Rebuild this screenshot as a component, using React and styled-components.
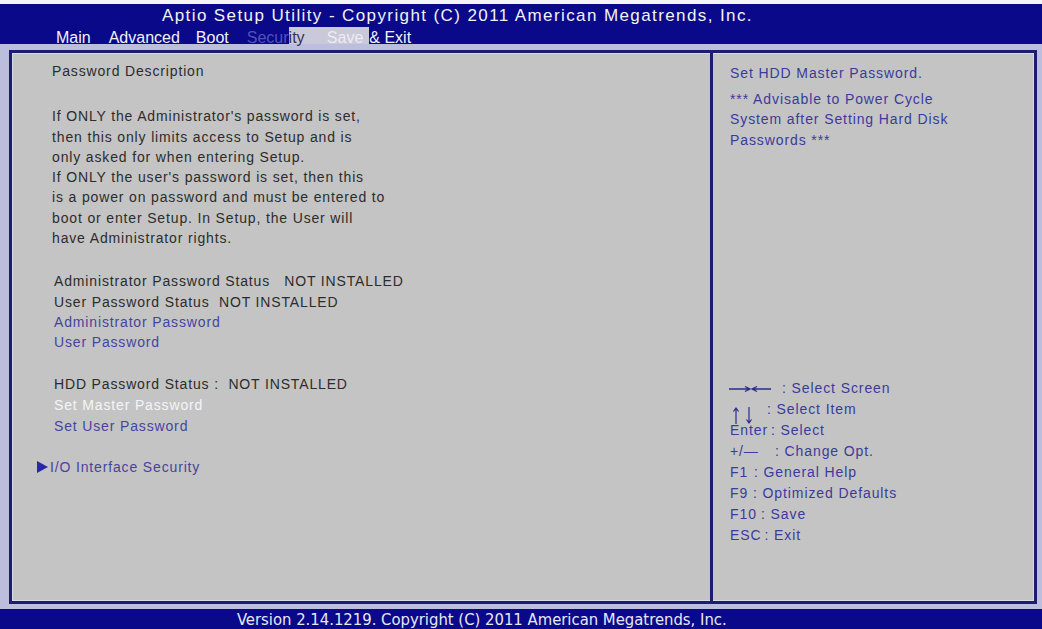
import React from 'react';
import styled, { createGlobalStyle } from 'styled-components';

const GlobalStyle = createGlobalStyle`
  html, body {
    margin: 0;
    padding: 0;
    background: #bdbddd;
  }
  body {
    font-family: "Liberation Sans", Arial, sans-serif;
  }
`;

const colors = {
  blue: '#09098a',
  navy: '#1c1c72',
  panel: '#c4c4c4',
  text: '#2c2c2c',
  link: '#44449f',
  help: '#3b3b9b',
  white: '#f2f2f6',
};

const Screen = styled.div`
  width: 1042px;
  height: 629px;
  box-sizing: border-box;
  border-top: 4px solid #f4f4fa;
  background: #bdbddd;
  display: flex;
  flex-direction: column;
  overflow: hidden;
`;

const TitleBar = styled.header`
  height: 40px;
  flex: none;
  background: ${colors.blue};
  color: ${colors.white};
  display: flex;
  flex-direction: column;
`;

const Title = styled.div`
  padding: 2px 0 0 162px;
  font-size: 17px;
  letter-spacing: 1.4px;
  line-height: 19px;
  white-space: pre;
`;

const MenuBar = styled.nav`
  margin-top: auto;
  height: 17px;
  padding-left: 56px;
  display: flex;
  align-items: stretch;
  font-size: 16px;
`;

const Tab = styled.span`
  line-height: 17px;
  padding-top: 2px;
  margin-right: ${p => p.$gap ?? 17}px;
  color: ${p => p.$faded ? '#5252b6' : colors.white};
  white-space: pre;
`;

const Highlight = styled.span`
  display: flex;
  background: #c9c9d9;
  padding-right: 6px;
  white-space: pre;
`;

const HiText = styled.span`
  line-height: 17px;
  padding-top: 2px;
  color: ${p => p.$light ? '#ececf2' : '#34345c'};
`;

const Body = styled.main`
  flex: 1;
  display: flex;
  padding: 6px 5px 5px 9px;
  min-height: 0;
`;

const Frame = styled.div`
  flex: 1;
  display: flex;
  border: 3px solid ${colors.navy};
  background: ${colors.panel};
  box-shadow: inset 0 0 0 1px #dadae6;
`;

const LeftPane = styled.section`
  flex: 1;
  border-right: 3px solid ${colors.navy};
  padding: 8px 0 0 40px;
  font-size: 14px;
  letter-spacing: 0.85px;
`;

const RightPane = styled.aside`
  width: 321px;
  flex: none;
  padding: 10px 0 0 17px;
  box-sizing: border-box;
  display: flex;
  flex-direction: column;
  font-size: 14px;
  letter-spacing: 0.9px;
  color: ${colors.help};
`;

const Block = styled.div`
  margin-top: ${p => p.$gap || 0}px;
  padding-left: ${p => p.$indent || 0}px;
`;

const tones = {
  text: colors.text,
  link: colors.link,
  active: '#f4f4f8',
};

const Line = styled.div`
  height: ${p => p.$h || 20.3}px;
  line-height: ${p => p.$h || 20.3}px;
  white-space: pre;
  color: ${p => tones[p.$tone || 'text']};
  display: flex;
  align-items: center;
`;

const Pointer = styled.span`
  width: 0;
  height: 0;
  border-top: 6px solid transparent;
  border-bottom: 6px solid transparent;
  border-left: 11px solid #2828a4;
  margin: 0 2px 0 -15px;
`;

const HelpText = styled.div`
  line-height: 20.5px;
  height: 20.5px;
  margin-bottom: ${p => p.$after || 0}px;
  white-space: pre;
`;

const HelpList = styled.div`
  margin-top: 227px;
`;

const HelpRow = styled.div`
  height: 21px;
  display: flex;
  align-items: center;
  white-space: pre;
`;

const Key = styled.span`
  min-width: ${p => p.$w}px;
  height: 21px;
  margin-right: 3px;
  flex: none;
  display: flex;
  align-items: center;
  position: relative;
`;

const Footer = styled.footer`
  height: 20px;
  flex: none;
  background: ${colors.blue};
  color: #e8e8f0;
  padding-left: 237px;
  font-family: "Liberation Sans Narrow", "DejaVu Sans Condensed", sans-serif;
  font-stretch: condensed;
  font-size: 16.5px;
  line-height: 21px;
  white-space: pre;
`;

const ArrowIcon = styled.svg`
  position: absolute;
  left: ${p => p.$x}px;
  top: ${p => p.$y}px;
  overflow: visible;
`;

const SideArrows = () => (
  <ArrowIcon $x={-1} $y={8} width="43" height="8" viewBox="0 0 43 8">
    <g fill="none" stroke="#2a2a8e" strokeWidth="1.3">
      <path d="M0 4H21M16 1.5L21 4L16 6.5" />
      <path d="M42 4H23M28 1.5L23 4L28 6.5" />
    </g>
  </ArrowIcon>
);

const UpDownArrows = () => (
  <ArrowIcon $x={2} $y={9} width="24" height="18" viewBox="0 0 24 18">
    <g fill="none" stroke="#2a2a8e" strokeWidth="1.2">
      <path d="M4 17V1M1.5 4.5L4 1L6.5 4.5" />
      <path d="M17 0V16M14.5 12.5L17 16L19.5 12.5" />
    </g>
  </ArrowIcon>
);

const description = [
  "If ONLY the Administrator's password is set,",
  'then this only limits access to Setup and is',
  'only asked for when entering Setup.',
  "If ONLY the user's password is set, then this",
  'is a power on password and must be entered to',
  'boot or enter Setup. In Setup, the User will',
  'have Administrator rights.',
];

const helpKeys = [
  { key: <SideArrows />, w: 49, text: ': Select Screen' },
  { key: <UpDownArrows />, w: 34, text: ': Select Item' },
  { key: 'Enter', w: 36, text: ': Select' },
  { key: '+/\u2014', w: 42, text: ': Change Opt.' },
  { key: 'F1', w: 21, text: ': General Help' },
  { key: 'F9', w: 20, text: ': Optimized Defaults' },
  { key: 'F10', w: 28, text: ': Save' },
  { key: 'ESC', w: 25, text: ': Exit' },
];

const App = () => (
  <>
    <GlobalStyle />
    <Screen>
      <TitleBar>
        <Title>Aptio Setup Utility - Copyright (C) 2011 American Megatrends, Inc.</Title>
        <MenuBar>
          <Tab $gap={18}>Main</Tab>
          <Tab $gap={16}>Advanced</Tab>
          <Tab $gap={18}>Boot</Tab>
          <Tab $faded $gap={0}>Secur</Tab>
          <Highlight>
            <HiText>ity     </HiText>
            <HiText $light>Save</HiText>
          </Highlight>
          <Tab>&amp; Exit</Tab>
        </MenuBar>
      </TitleBar>

      <Body>
        <Frame>
          <LeftPane>
            <Line>Password Description</Line>
            <Block $gap={25}>
              {description.map(line => (
                <Line key={line}>{line}</Line>
              ))}
            </Block>
            <Block $gap={23} $indent={2}>
              <Line>Administrator Password Status   NOT INSTALLED</Line>
              <Line>User Password Status  NOT INSTALLED</Line>
              <Line $tone="link">Administrator Password</Line>
              <Line $tone="link">User Password</Line>
            </Block>
            <Block $gap={21} $indent={2}>
              <Line $h={21}>HDD Password Status :  NOT INSTALLED</Line>
              <Line $h={21} $tone="active">Set Master Password</Line>
              <Line $h={21} $tone="link">Set User Password</Line>
            </Block>
            <Block $gap={20}>
              <Line $tone="link">
                <Pointer />
                I/O Interface Security
              </Line>
            </Block>
          </LeftPane>

          <RightPane>
            <HelpText $after={5}>Set HDD Master Password.</HelpText>
            <HelpText>*** Advisable to Power Cycle</HelpText>
            <HelpText>System after Setting Hard Disk</HelpText>
            <HelpText>Passwords ***</HelpText>
            <HelpList>
              {helpKeys.map((item, i) => (
                <HelpRow key={i}>
                  <Key $w={item.w}>{item.key}</Key>
                  {item.text}
                </HelpRow>
              ))}
            </HelpList>
          </RightPane>
        </Frame>
      </Body>

      <Footer>Version 2.14.1219. Copyright (C) 2011 American Megatrends, Inc.</Footer>
    </Screen>
  </>
);

export default App;
